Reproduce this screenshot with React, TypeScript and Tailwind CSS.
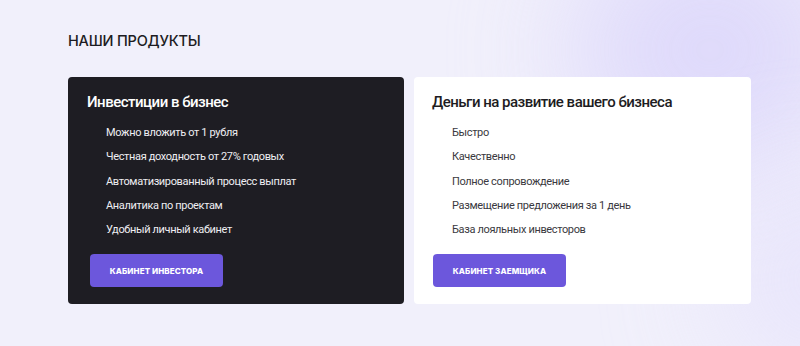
import React from "react";

const investor = [
  "Можно вложить от 1 рубля",
  "Честная доходность от 27% годовых",
  "Автоматизированный процесс выплат",
  "Аналитика по проектам",
  "Удобный личный кабинет",
];
const borrower = [
  "Быстро",
  "Качественно",
  "Полное сопровождение",
  "Размещение предложения за 1 день",
  "База лояльных инвесторов",
];

export default function App() {
  return (
    <div
      className="relative w-[800px] h-[346px] overflow-hidden bg-[#f1f0fb]"
      style={{ fontFamily: "Roboto, 'Noto Sans', sans-serif" }}
    >
      <div className="absolute left-[570px] top-[-70px] w-[280px] h-[240px] rounded-full bg-[#dad4fb] blur-[60px] opacity-80" />
      <div className="absolute left-[720px] top-[180px] w-[200px] h-[200px] rounded-full bg-[#e4e0fc] blur-[60px] opacity-70" />
      <div className="relative flex flex-col pl-[68px] pt-[32px]">
        <h2
          className="text-[14.5px] font-medium text-[#1d1c22] leading-[18px] tracking-[-0.2px]"
          style={{ fontFamily: "Inter, sans-serif" }}
        >
          НАШИ ПРОДУКТЫ
        </h2>
        <div className="mt-[27px] flex gap-[10px]">
          <div className="w-[336px] h-[227px] rounded-[4px] bg-[#1e1d23] pl-[19px] pt-[16px]">
            <div className="text-[15px] font-medium text-white leading-[18px] tracking-[-0.5px]">
              Инвестиции в бизнес
            </div>
            <ul className="mt-[15px] pl-[19px] flex flex-col gap-[10.3px]">
              {investor.map((t) => (
                <li key={t} className="text-[11px] leading-[14px] text-[#eeeef2] tracking-[-0.35px]">
                  {t}
                </li>
              ))}
            </ul>
            <button
              className="mt-[17px] ml-[3px] w-[133px] h-[33px] rounded-[4px] bg-[#6c57dc] text-white text-[8px] font-extrabold uppercase tracking-[0.1px]"
              style={{ fontFamily: "Inter, sans-serif" }}
            >
              Кабинет инвестора
            </button>
          </div>
          <div className="w-[337px] h-[227px] rounded-[4px] bg-white pl-[18px] pt-[16px]">
            <div className="text-[15px] font-medium text-[#1d1c22] leading-[18px] tracking-[-0.5px]">
              Деньги на развитие вашего бизнеса
            </div>
            <ul className="mt-[15px] pl-[20px] flex flex-col gap-[10.3px]">
              {borrower.map((t) => (
                <li key={t} className="text-[11px] leading-[14px] text-[#3a3940] tracking-[-0.35px]">
                  {t}
                </li>
              ))}
            </ul>
            <button
              className="mt-[17px] ml-[1px] w-[133px] h-[33px] rounded-[4px] bg-[#6c57dc] text-white text-[8px] font-extrabold uppercase tracking-[0.1px]"
              style={{ fontFamily: "Inter, sans-serif" }}
            >
              Кабинет заемщика
            </button>
          </div>
        </div>
      </div>
    </div>
  );
}
